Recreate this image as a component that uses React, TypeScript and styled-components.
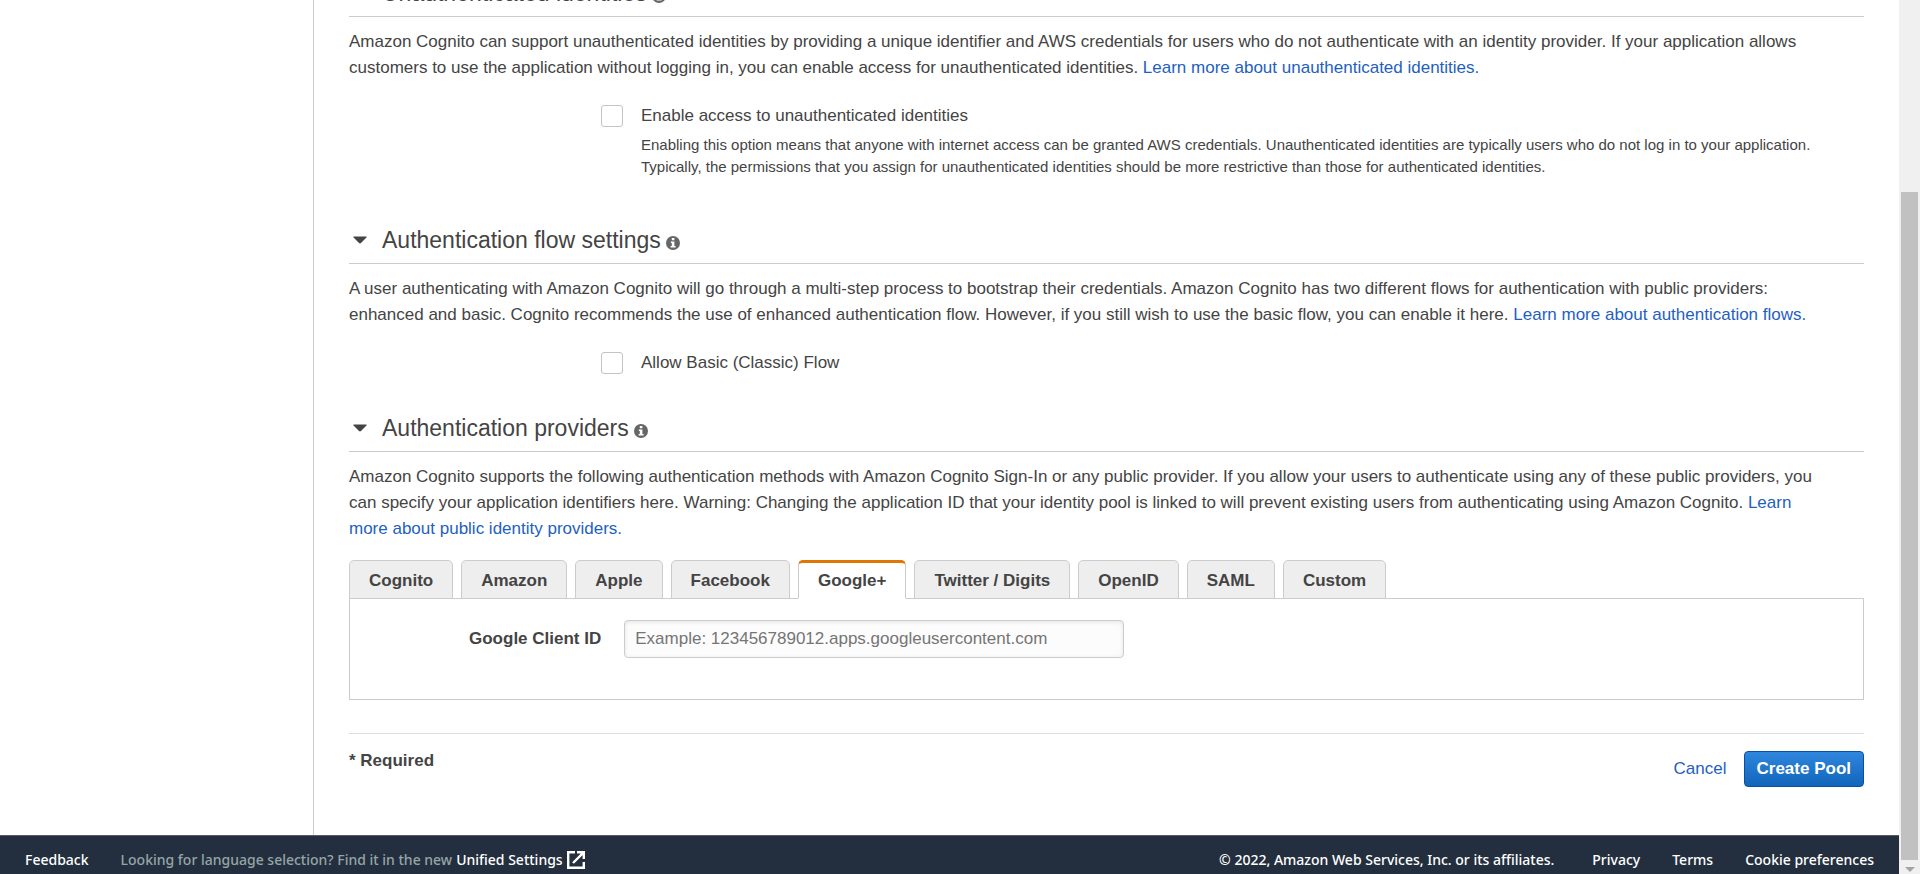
import React, { useState } from "react";
import styled, { createGlobalStyle, css } from "styled-components";

const GlobalStyle = createGlobalStyle`
  * {
    box-sizing: border-box;
  }
  body {
    margin: 0;
    background: #fff;
    color: #444;
    font-family: "Liberation Sans", Arial, Helvetica, sans-serif;
    font-size: 17px;
    line-height: 26px;
  }
`;

const Window = styled.div`
  display: flex;
  height: 100vh;
  overflow: hidden;
`;

const Page = styled.div`
  flex: 1;
  min-width: 0;
  display: flex;
  flex-direction: column;
`;

const Body = styled.div`
  flex: 1;
  min-height: 0;
  display: flex;
  overflow: hidden;
`;

const Sidebar = styled.aside`
  flex: 0 0 314px;
  border-right: 1px solid #ccc;
`;

const Main = styled.main`
  flex: 1;
  min-width: 0;
  margin-top: -21px;
  padding: 0 35px;
`;

const Section = styled.section<{ $space: number }>`
  padding-bottom: ${(p) => p.$space}px;
`;

const SectionTitle = styled.h2`
  display: flex;
  align-items: center;
  margin: 0 0 12px;
  padding: 0 0 9px 4px;
  border-bottom: 1px solid #ccc;
  font-size: 23px;
  font-weight: 400;
  line-height: 28px;
`;

const Caret = styled.svg`
  width: 14px;
  height: 8px;
  margin-right: 15px;
  fill: #444;
`;

const InfoIcon = styled.svg`
  width: 14px;
  height: 14px;
  margin: 5px 0 0 5px;
`;

const Paragraph = styled.p`
  margin: 0;
`;

const Link = styled.a`
  color: #1f5fbf;
  text-decoration: none;
`;

const Option = styled.div`
  display: grid;
  grid-template-columns: 22px 1fr;
  column-gap: 18px;
  align-items: center;
  margin: 22px 0 0 252px;
`;

const Checkbox = styled.input`
  appearance: none;
  width: 22px;
  height: 22px;
  margin: 0;
  border: 1px solid #c4c4c4;
  border-radius: 3px;
  background: #fff;
`;

const OptionHelp = styled.p`
  grid-column: 2;
  margin: 5px 0 0;
  font-size: 15px;
  line-height: 22px;
`;

const Tabs = styled.div`
  display: flex;
  gap: 8px;
  margin-top: 18px;
`;

const Tab = styled.button<{ $active: boolean }>`
  height: 39px;
  margin-bottom: -1px;
  padding: 3px 19px 0;
  border: 1px solid #ccc;
  border-radius: 5px 5px 0 0;
  background: #eee;
  color: #444;
  font: inherit;
  font-weight: 700;
  white-space: nowrap;
  ${(p) =>
    p.$active &&
    css`
      padding-top: 1px;
      border-top: 3px solid #e07700;
      border-bottom-color: #fff;
      background: #fff;
    `}
`;

const TabPanel = styled.div`
  display: flex;
  align-items: flex-start;
  gap: 23px;
  height: 102px;
  padding: 21px 0 0 119px;
  border: 1px solid #ccc;
`;

const FieldLabel = styled.label`
  font-weight: 700;
  line-height: 38px;
`;

const TextInput = styled.input`
  width: 500px;
  height: 38px;
  padding: 0 10px;
  border: 1px solid #ccc;
  border-radius: 4px;
  background: #fcfcfc;
  box-shadow: inset 0 1px 4px #e4e4e4;
  color: #444;
  font: inherit;
  &::placeholder {
    color: #757575;
    opacity: 1;
  }
`;

const FormFooter = styled.div`
  display: flex;
  justify-content: space-between;
  align-items: flex-start;
  margin-top: 33px;
  padding-top: 14px;
  border-top: 1px solid #ddd;
`;

const Required = styled.strong``;

const Actions = styled.div`
  display: flex;
  align-items: center;
  gap: 17px;
  padding-top: 3px;
`;

const PrimaryButton = styled.button`
  height: 36px;
  padding: 0 12px;
  border: 1px solid #0a50a1;
  border-radius: 4px;
  background: linear-gradient(#2f86dd, #1166bb);
  color: #fff;
  font: inherit;
  font-weight: 700;
`;

const Footer = styled.footer`
  flex: 0 0 39px;
  display: flex;
  align-items: center;
  padding: 9px 25px 0;
  border-top: 1px solid #545b64;
  background: #232f3e;
  color: #fff;
  font-family: "Noto Sans", sans-serif;
  font-size: 14px;
  font-weight: 500;
  line-height: 20px;
  white-space: nowrap;
`;

const FooterLink = styled.a`
  display: inline-flex;
  align-items: center;
  gap: 4px;
  color: #fff;
  text-decoration: none;
`;

const LanguageHint = styled.span`
  display: flex;
  gap: 4px;
  margin: 0 auto 0 32px;
  color: #95a5a6;
`;

const LegalLinks = styled.div`
  display: flex;
  gap: 32px;
`;

const Copyright = styled.span`
  margin-right: 6px;
`;

const Scrollbar = styled.div`
  flex: 0 0 21px;
  display: flex;
  flex-direction: column;
  align-items: center;
  background: #f0f0f0;
`;

const ScrollSpace = styled.div`
  flex: 192;
`;

const ScrollThumb = styled.div`
  flex: 668;
  width: 17px;
  background: #c1c1c1;
`;

const ScrollArrow = styled.svg`
  flex: 0 0 14px;
  width: 10px;
  fill: #a3a3a3;
`;

const providers = ["Cognito", "Amazon", "Apple", "Facebook", "Google+", "Twitter / Digits", "OpenID", "SAML", "Custom"];

function Title({ children }: { children: React.ReactNode }) {
  return (
    <SectionTitle>
      <Caret viewBox="0 0 14 8" aria-hidden="true">
        <path d="M1 0.5h12q1 0.2 0.4 1L8 7q-1 0.8-2 0L0.6 1.5Q0 0.7 1 0.5z" />
      </Caret>
      {children}
      <InfoIcon viewBox="0 0 14 14" aria-hidden="true">
        <circle cx="7" cy="7" r="7" fill="#666" />
        <path d="M5.8 2h2.6v2.2H5.8zM4.8 5.4h3.6v4.6h1.2v1.6H4.6V10h1.2V7H4.8z" fill="#fff" />
      </InfoIcon>
    </SectionTitle>
  );
}

export default function App() {
  const [active, setActive] = useState("Google+");
  return (
    <>
      <GlobalStyle />
      <Window>
        <Page>
          <Body>
            <Sidebar />
            <Main>
              <Section $space={48}>
                <Title>Unauthenticated identities</Title>
                <Paragraph>
                  Amazon Cognito can support unauthenticated identities by providing a unique identifier and AWS
                  credentials for users who do not authenticate with an identity provider. If your application allows
                  <br />
                  customers to use the application without logging in, you can enable access for unauthenticated
                  identities. <Link href="#unauthenticated">Learn more about unauthenticated identities.</Link>
                </Paragraph>
                <Option>
                  <Checkbox type="checkbox" id="unauthenticated" />
                  <label htmlFor="unauthenticated">Enable access to unauthenticated identities</label>
                  <OptionHelp>
                    Enabling this option means that anyone with internet access can be granted AWS credentials.
                    Unauthenticated identities are typically users who do not log in to your application. Typically,
                    the permissions that you assign for unauthenticated identities should be more restrictive than
                    those for authenticated identities.
                  </OptionHelp>
                </Option>
              </Section>
              <Section $space={38}>
                <Title>Authentication flow settings</Title>
                <Paragraph>
                  A user authenticating with Amazon Cognito will go through a multi-step process to bootstrap their
                  credentials. Amazon Cognito has two different flows for authentication with public providers:
                  <br />
                  enhanced and basic. Cognito recommends the use of enhanced authentication flow. However, if you still
                  wish to use the basic flow, you can enable it here.{" "}
                  <Link href="#flows">Learn more about authentication flows.</Link>
                </Paragraph>
                <Option>
                  <Checkbox type="checkbox" id="basic-flow" />
                  <label htmlFor="basic-flow">Allow Basic (Classic) Flow</label>
                </Option>
              </Section>
              <Section $space={0}>
                <Title>Authentication providers</Title>
                <Paragraph>
                  Amazon Cognito supports the following authentication methods with Amazon Cognito Sign-In or any
                  public provider. If you allow your users to authenticate using any of these public providers, you
                  <br />
                  can specify your application identifiers here. Warning: Changing the application ID that your
                  identity pool is linked to will prevent existing users from authenticating using Amazon Cognito.{" "}
                  <Link href="#providers">
                    Learn
                    <br />
                    more about public identity providers.
                  </Link>
                </Paragraph>
                <Tabs role="tablist">
                  {providers.map((name) => (
                    <Tab
                      key={name}
                      role="tab"
                      aria-selected={name === active}
                      $active={name === active}
                      onClick={() => setActive(name)}
                    >
                      {name}
                    </Tab>
                  ))}
                </Tabs>
                <TabPanel role="tabpanel">
                  <FieldLabel htmlFor="client-id">Google Client ID</FieldLabel>
                  <TextInput id="client-id" placeholder="Example: 123456789012.apps.googleusercontent.com" />
                </TabPanel>
              </Section>
              <FormFooter>
                <Required>* Required</Required>
                <Actions>
                  <Link href="#cancel">Cancel</Link>
                  <PrimaryButton>Create Pool</PrimaryButton>
                </Actions>
              </FormFooter>
            </Main>
          </Body>
          <Footer>
            <FooterLink href="#feedback">Feedback</FooterLink>
            <LanguageHint>
              Looking for language selection? Find it in the new
              <FooterLink href="#settings">
                Unified Settings
                <svg width="18" height="18" viewBox="0 0 18 18" aria-hidden="true">
                  <path
                    d="M8 1.2H1.2v15.6h15.6V11M10 1.2h6.8V8M16.4 1.6L6 12"
                    fill="none"
                    stroke="#fff"
                    strokeWidth="2.4"
                  />
                </svg>
              </FooterLink>
            </LanguageHint>
            <LegalLinks>
              <Copyright>© 2022, Amazon Web Services, Inc. or its affiliates.</Copyright>
              <FooterLink href="#privacy">Privacy</FooterLink>
              <FooterLink href="#terms">Terms</FooterLink>
              <FooterLink href="#cookies">Cookie preferences</FooterLink>
            </LegalLinks>
          </Footer>
        </Page>
        <Scrollbar aria-hidden="true">
          <ScrollSpace />
          <ScrollThumb />
          <ScrollArrow viewBox="0 0 10 14">
            <path d="M0 7h10L5 12z" />
          </ScrollArrow>
        </Scrollbar>
      </Window>
    </>
  );
}
